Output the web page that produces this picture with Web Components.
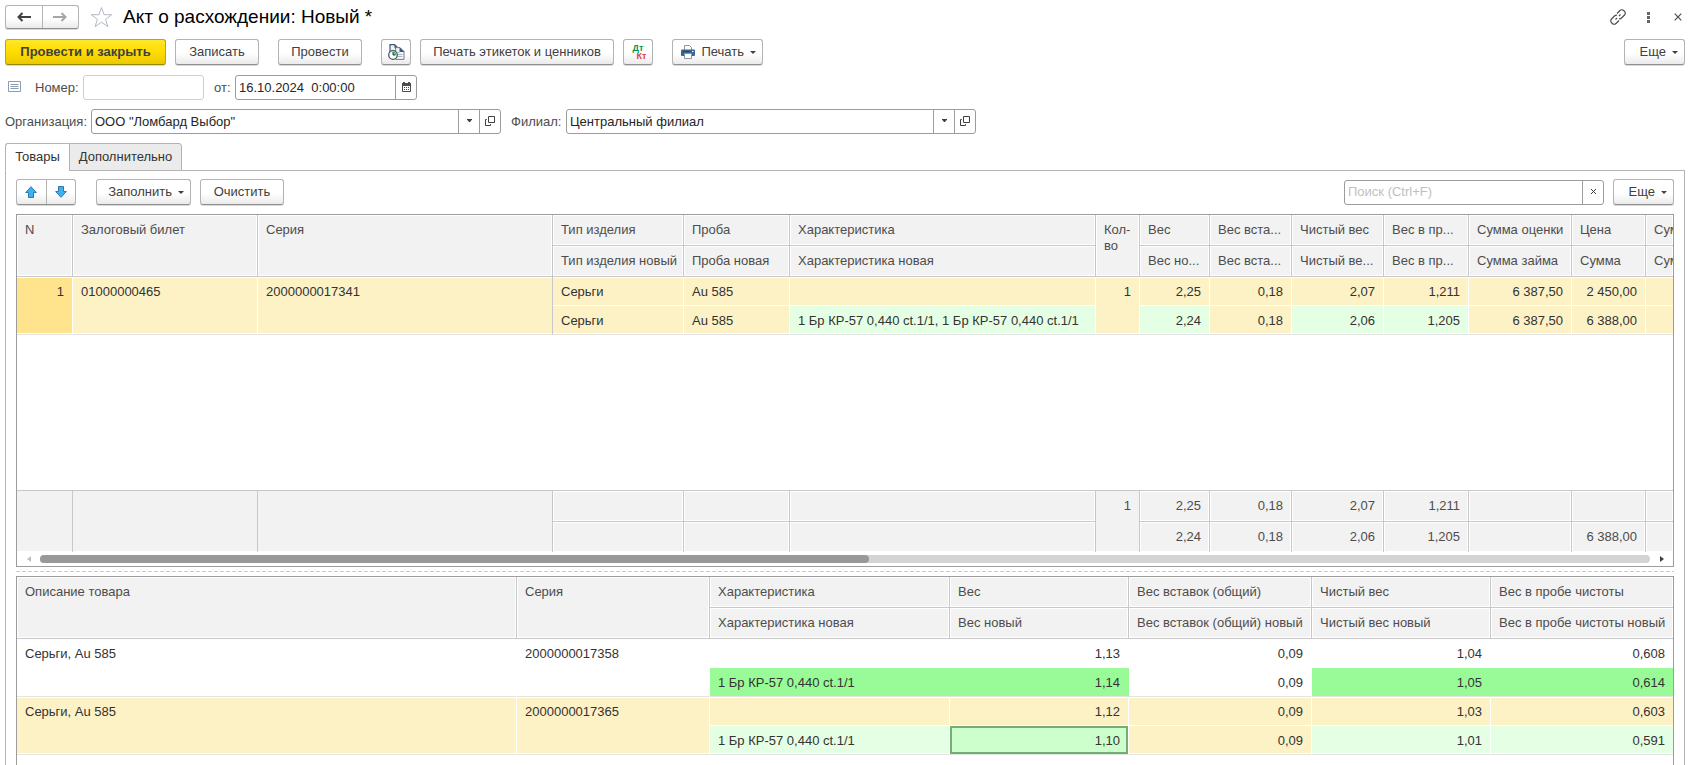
<!DOCTYPE html>
<html lang="ru">
<head>
<meta charset="utf-8">
<title>Акт о расхождении: Новый *</title>
<style>
  html, body { height: 100%; }
  body { margin: 0; overflow: hidden; background: #fff; color: #404040; font: 13px/16px "Liberation Sans", Arial, sans-serif; }
</style>
</head>
<body>
<discrepancy-act></discrepancy-act>

<script>
const BASE = `
  *, *::before, *::after { box-sizing: border-box; }
  button, input { font: inherit; color: inherit; margin: 0; }
  button { cursor: pointer; }
  svg { display: block; flex: none; }
`;

function define(name, markup, extra = {}) {
  const template = document.createElement('template');
  template.innerHTML = markup;
  class Element extends HTMLElement {
    constructor() {
      super();
      this.attachShadow({ mode: 'open' }).append(template.content.cloneNode(true));
    }
    connectedCallback() { if (extra.setup) extra.setup(this, this.shadowRoot); }
  }
  customElements.define(name, Element);
}

/* Command button: kind="primary" is yellow, "menu" has a caret on the right */
define('act-button', `<style>${BASE}
  :host { display: block; height: 26px; flex: none; }
  button { display: flex; align-items: center; justify-content: center; gap: 8px; width: 100%; height: 100%; padding: 0 4px; white-space: nowrap;
    border: 1px solid #b3b3b3; border-bottom-color: #8f8f8f; border-radius: 3px; background: linear-gradient(#fff 55%, #ebebeb); box-shadow: 0 1px 0 #d9d9d9; }
  .caret { display: none; width: 0; border: 3px solid transparent; border-top-color: #404040; border-bottom: 0; }
  :host([kind="primary"]) button { font-weight: bold; background: linear-gradient(#ffe629, #ffdd00 50%, #ecc900); border-color: #c2a500; border-bottom-color: #9c8600; }
  :host([kind="menu"]) button { justify-content: flex-end; padding: 0 6px; gap: 6px; }
  :host([kind="menu"]) .caret { display: block; }
</style><button type="button"><slot></slot><span class="caret"></span></button>`, {
  setup(host, root) {
    if (host.hasAttribute('hint')) root.querySelector('button').setAttribute('aria-label', host.getAttribute('hint'));
  }
});

/* Two joined icon buttons */
define('button-pair', `<style>${BASE}
  :host { display: flex; flex: none; border: 1px solid #b3b3b3; border-bottom-color: #8f8f8f; border-radius: 3px; background: linear-gradient(#fff 55%, #ebebeb); box-shadow: 0 1px 0 #d9d9d9; }
  button { flex: 1; display: flex; align-items: center; justify-content: center; padding: 0; border: 0; background: none; }
  button + button { border-left: 1px solid #b3b3b3; }
</style>
<button type="button" class="a"><slot name="first"></slot></button><button type="button" class="b"><slot name="second"></slot></button>`, {
  setup(host, root) {
    root.querySelector('.a').setAttribute('aria-label', host.getAttribute('first-hint'));
    root.querySelector('.b').setAttribute('aria-label', host.getAttribute('second-hint'));
  }
});

/* Labelled text box with optional buttons: buttons="date" | "ref" | "clear" */
const FIELD_BUTTONS = {
  date: `<button type="button" aria-label="Календарь"><svg width="9" height="10" viewBox="0 0 9 10"><path d="M.5 2.500h8v7h-8z" fill="none" stroke="#4d4d4d"/><path d="M0 1h9v3H0zM1 0h2v2H1zM6 0h2v2H6z" fill="#4d4d4d"/><path d="M2 5.500h5M2 7.500h5" stroke="#4d4d4d" stroke-dasharray="1 1" fill="none"/></svg></button>`,
  ref: `<button type="button" aria-label="Выбрать"><svg width="5" height="3" viewBox="0 0 5 3"><path d="M0 0h5v.5L3 3H2L0 .5z" fill="#404040"/></svg></button><button type="button" aria-label="Открыть"><svg width="10" height="10" viewBox="0 0 10 10" fill="none" stroke="#404040"><path d="M3.500.5h6v6h-6zM1.800 3.500H.5v6h5V8.200"/></svg></button>`,
  clear: `<button type="button" aria-label="Очистить поиск"><svg width="7" height="7" viewBox="0 0 7 7"><path d="M1 1l5 5M6 1L1 6" stroke="#404040"/></svg></button>`
};
define('act-field', `<style>${BASE}
  :host { display: flex; align-items: center; height: 25px; flex: none; --line: #9c9c9c; }
  label { width: var(--label, auto); flex: none; color: #4d4d4d; }
  .box { display: flex; width: var(--box, 100%); height: 100%; border: 1px solid var(--line); border-radius: 3px; background: #fff; }
  input { flex: 1; min-width: 0; border: 0; outline: 0; background: none; padding: 0 3px; color: #262626; }
  input::placeholder { color: #bfbfbf; opacity: 1; }
  button { width: 21px; flex: none; padding: 0 0 2px; border: 0; border-left: 1px solid var(--line); background: none; display: flex; align-items: center; justify-content: center; }
  :host([plain]) { --line: #cfcfcf; }
</style><label for="v"></label><div class="box"><input id="v" type="text" autocomplete="off"></div>`, {
  setup(host, root) {
    const label = root.querySelector('label'), input = root.querySelector('input');
    if (host.hasAttribute('label')) label.textContent = host.getAttribute('label'); else label.remove();
    input.value = host.getAttribute('value') || '';
    if (host.hasAttribute('placeholder')) {
      input.placeholder = host.getAttribute('placeholder');
      input.setAttribute('aria-label', 'Поиск');
    }
    const kind = host.getAttribute('buttons');
    if (kind) root.querySelector('.box').insertAdjacentHTML('beforeend', FIELD_BUTTONS[kind]);
  }
});

define('act-tabs', `<style>${BASE}
  :host { display: flex; height: 28px; margin-bottom: -1px; position: relative; }
  button { padding: 0 0 1px; text-align: center; border: 1px solid #b3b3b3; background: #ebebeb; color: #333; }
  button[aria-selected="true"] { width: 64px; background: #fff; border-bottom-color: #fff; border-right: 0; border-radius: 3px 0 0 0; }
  button[aria-selected="false"] { width: 113px; border-radius: 0 3px 0 0; }
  div { display: flex; }
</style><div role="tablist"><button type="button" role="tab" aria-selected="true">Товары</button><button type="button" role="tab" aria-selected="false">Дополнительно</button></div>`);

const GRID = `${BASE}
  table { width: 100%; table-layout: fixed; border-collapse: separate; border-spacing: 0; }
  th, td { padding: 7px 8px 0; vertical-align: top; overflow: hidden; white-space: nowrap; font-weight: normal; text-align: left; }
  th, tfoot td { height: 31px; background: #f2f2f2; color: #4d4d4d; box-shadow: inset 0 0 0 1px #fff; border-right: 1px solid #c8c8c8; }
  th { border-bottom: 1px solid #c8c8c8; }
  th.wrap { white-space: normal; }
  tr > :last-child.edge { border-right: 0; }
  tfoot td { border-top: 1px solid #c8c8c8; }
  tbody td { height: 29px; color: #333; border-right: 1px solid #fff; border-bottom: 1px solid #fff; }
  tr.new td, td[rowspan] { border-bottom-color: #e3e3e3; box-shadow: inset 0 -1px 0 #fff; }
  tr.old td { box-shadow: inset 0 1px 0 #fff; }
  tr.old td[rowspan] { box-shadow: inset 0 1px 0 #fff, inset 0 -1px 0 #fff; }
  tfoot td[rowspan] { border-bottom: 0; }
  .n { text-align: right; }
  .sel td { background: #fdf1c6; }
  .sel td.cur { background: #ffe48d; }
  .sel td.frozen { border-right-color: #c8c8c8; }
  .sel td.diff { background: #e4ffe4; }
  tr.new td.diff2 { background: #98fb98; border-right-color: #98fb98; box-shadow: none; }
  .sel td.focus { background: #ccffcc; box-shadow: inset 0 0 0 2px #76ad76; border-bottom-color: #e3e3e3; }
`;

define('goods-grid', `<style>${GRID}
  :host { display: block; border: 1px solid #9c9c9c; }
  .gap td { height: 155px; padding: 0; border: 0; }
  .scroll { display: flex; align-items: center; height: 14px; }
  .scroll button { width: 23px; height: 14px; padding: 0; border: 0; background: none; display: flex; align-items: center; justify-content: center; }
  .track { flex: 1; height: 8px; border-radius: 4px; background: #d4d4d4; }
  .thumb { width: 51.5%; height: 8px; border-radius: 4px; background: #999; }
</style>
<table>
<colgroup><col style="width:56px"><col style="width:185px"><col style="width:295px"><col style="width:131px"><col style="width:106px"><col style="width:306px"><col style="width:44px"><col style="width:70px"><col style="width:82px"><col style="width:92px"><col style="width:85px"><col style="width:103px"><col style="width:74px"><col></colgroup>
<thead>
<tr><th rowspan="2">N</th><th rowspan="2">Залоговый билет</th><th rowspan="2">Серия</th><th>Тип изделия</th><th>Проба</th><th>Характеристика</th><th rowspan="2" class="wrap">Кол-во</th><th>Вес</th><th>Вес вста...</th><th>Чистый вес</th><th>Вес в пр...</th><th>Сумма оценки</th><th>Цена</th><th class="edge">Сум</th></tr>
<tr><th>Тип изделия новый</th><th>Проба новая</th><th>Характеристика новая</th><th>Вес но...</th><th>Вес вста...</th><th>Чистый ве...</th><th>Вес в пр...</th><th>Сумма займа</th><th>Сумма</th><th class="edge">Сум</th></tr>
</thead>
<tbody>
<tr class="old sel"><td rowspan="2" class="n cur">1</td><td rowspan="2">01000000465</td><td rowspan="2" class="frozen">2000000017341</td><td>Серьги</td><td>Au 585</td><td></td><td rowspan="2" class="n">1</td><td class="n">2,25</td><td class="n">0,18</td><td class="n">2,07</td><td class="n">1,211</td><td class="n">6 387,50</td><td class="n">2 450,00</td><td class="edge"></td></tr>
<tr class="new sel"><td>Серьги</td><td>Au 585</td><td class="diff">1 Бр КР-57 0,440 ct.1/1, 1 Бр КР-57 0,440 ct.1/1</td><td class="n diff">2,24</td><td class="n">0,18</td><td class="n diff">2,06</td><td class="n diff">1,205</td><td class="n">6 387,50</td><td class="n">6 388,00</td><td class="edge"></td></tr>
<tr class="gap"><td colspan="14"></td></tr>
</tbody>
<tfoot>
<tr><td rowspan="2"></td><td rowspan="2"></td><td rowspan="2"></td><td></td><td></td><td></td><td rowspan="2" class="n">1</td><td class="n">2,25</td><td class="n">0,18</td><td class="n">2,07</td><td class="n">1,211</td><td></td><td></td><td class="edge"></td></tr>
<tr><td></td><td></td><td></td><td class="n">2,24</td><td class="n">0,18</td><td class="n">2,06</td><td class="n">1,205</td><td></td><td class="n">6 388,00</td><td class="edge"></td></tr>
</tfoot>
</table>
<div class="scroll"><button type="button" aria-label="Влево"><svg width="4" height="6" viewBox="0 0 4 6"><path d="M4 0v6L0 3z" fill="#bfbfbf"/></svg></button><div class="track"><div class="thumb"></div></div><button type="button" aria-label="Вправо"><svg width="4" height="6" viewBox="0 0 4 6"><path d="M0 0v6l4-3z" fill="#404040"/></svg></button></div>`);

define('items-grid', `<style>${GRID}
  :host { display: block; flex: 1; border: 1px solid #9c9c9c; border-bottom: 0; }
</style>
<table>
<colgroup><col><col style="width:193px"><col style="width:240px"><col style="width:179px"><col style="width:183px"><col style="width:179px"><col style="width:182px"></colgroup>
<thead>
<tr><th rowspan="2">Описание товара</th><th rowspan="2">Серия</th><th>Характеристика</th><th>Вес</th><th>Вес вставок (общий)</th><th>Чистый вес</th><th class="edge">Вес в пробе чистоты</th></tr>
<tr><th>Характеристика новая</th><th>Вес новый</th><th>Вес вставок (общий) новый</th><th>Чистый вес новый</th><th class="edge">Вес в пробе чистоты новый</th></tr>
</thead>
<tbody>
<tr class="old"><td rowspan="2">Серьги, Au 585</td><td rowspan="2">2000000017358</td><td></td><td class="n">1,13</td><td class="n">0,09</td><td class="n">1,04</td><td class="n edge">0,608</td></tr>
<tr class="new"><td class="diff2">1 Бр КР-57 0,440 ct.1/1</td><td class="n diff2">1,14</td><td class="n">0,09</td><td class="n diff2">1,05</td><td class="n edge diff2">0,614</td></tr>
<tr class="old sel"><td rowspan="2">Серьги, Au 585</td><td rowspan="2">2000000017365</td><td></td><td class="n">1,12</td><td class="n">0,09</td><td class="n">1,03</td><td class="n edge">0,603</td></tr>
<tr class="new sel"><td class="diff">1 Бр КР-57 0,440 ct.1/1</td><td class="n diff focus">1,10</td><td class="n">0,09</td><td class="n diff">1,01</td><td class="n edge diff">0,591</td></tr>
</tbody>
</table>`);

define('discrepancy-act', `<style>${BASE}
  :host { display: flex; flex-direction: column; height: 100%; padding: 5px 5px 0; }
  .row { display: flex; align-items: center; flex: none; }
  .grow { flex: 1; }
  .title { height: 24px; margin-bottom: 10px; }
  .title button-pair { width: 74px; height: 24px; }
  .title .star { margin: 0 10px 0 11px; padding: 0; border: 0; background: none; }
  h1 { margin: 0; font-size: 19px; line-height: 24px; font-weight: normal; color: #000; }
  .tools { display: flex; gap: 16px; }
  .tools button { width: 14px; height: 16px; padding: 0; border: 0; background: none; display: flex; align-items: center; justify-content: center; }
  .commands { margin-bottom: 10px; gap: 9px; }
  .sp { margin-left: 10px; }
  .w-primary { width: 161px; } .w-std { width: 84px; } .w-icon { width: 30px; } .w-long { width: 194px; } .w-print { width: 91px; } .w-more { width: 61px; } .w-fill { width: 95px; }
  .number { margin-bottom: 9px; gap: 10px; }
  .number .state { width: 20px; padding: 0 3px 3px; }
  .refs { margin-bottom: 9px; gap: 10px; }
  .pane { flex: 1; min-height: 0; display: flex; flex-direction: column; border: 1px solid #b3b3b3; border-bottom: 0; padding: 8px 10px 0; }
  .bar { height: 26px; margin-bottom: 9px; gap: 9px; }
  .bar button-pair { width: 60px; height: 26px; margin-right: 11px; }
  .split { height: 9px; flex: none; display: flex; align-items: center; }
  .split::before { content: ""; flex: 1; height: 1px; background: repeating-linear-gradient(90deg, #ccc 0 4px, transparent 4px 6px); }
  .dk { display: grid; width: 17px; font: bold 9px/8px "Liberation Sans", Arial, sans-serif; }
  .dk .d { color: #009646; } .dk .k { color: #e0403c; text-align: right; }
</style>
<header class="row title">
  <button-pair first-hint="Назад" second-hint="Вперед">
    <svg slot="first" width="14" height="10" viewBox="0 0 14 10"><path d="M14 5H2M5.500 1L1.500 5l4 4" fill="none" stroke="#404040" stroke-width="2"/></svg>
    <svg slot="second" width="14" height="10" viewBox="0 0 14 10"><path d="M0 5h12M8.500 1l4 4-4 4" fill="none" stroke="#a6a6a6" stroke-width="2"/></svg>
  </button-pair>
  <button class="star" type="button" aria-label="В избранное"><svg width="23" height="23" viewBox="0 0 23 23"><path d="M11.500 1.500l2.600 7.200h7.600l-6.100 4.600 2.300 7.400-6.400-4.500-6.400 4.500 2.300-7.400-6.100-4.600h7.600z" fill="#fff" stroke="#b3b9c2" stroke-width="1"/></svg></button>
  <h1>Акт о расхождении: Новый *</h1>
  <span class="grow"></span>
  <div class="tools">
    <button type="button" aria-label="Ссылка"><svg width="16" height="16" viewBox="0 0 16 16" fill="none" stroke="#4d4d4d" stroke-width="1.200"><path d="M7 4.500l3-3a2.600 2.600 0 0 1 3.700 0l.8.8a2.600 2.600 0 0 1 0 3.700l-3 3a2.600 2.600 0 0 1-2.500.7M9 11.500l-3 3a2.600 2.600 0 0 1-3.700 0l-.8-.8a2.600 2.600 0 0 1 0-3.700l3-3A2.600 2.600 0 0 1 7 6.300M5.500 10.500l1.500-1.500M9 7l1.500-1.500"/></svg></button>
    <button type="button" aria-label="Меню"><svg width="3" height="11" viewBox="0 0 3 11" fill="#666"><path d="M0 0h3v3H0zM0 4h3v3H0zM0 8h3v3H0z"/></svg></button>
    <button type="button" aria-label="Закрыть"><svg width="8" height="8" viewBox="0 0 8 8"><path d="M.7.700l6.600 6.600M7.300.700L.7 7.300" stroke="#4d4d4d" stroke-width="1.200"/></svg></button>
  </div>
</header>

<div class="row commands">
  <act-button kind="primary" class="w-primary">Провести и закрыть</act-button>
  <act-button class="w-std">Записать</act-button>
  <act-button class="w-std sp">Провести</act-button>
  <act-button class="w-icon sp" hint="Отложенное проведение"><svg width="17" height="16" viewBox="0 0 17 16"><path d="M2 12V.6h4.500L10 4v8z" fill="#eef2f6" stroke="#44586d" stroke-width="1.200"/><path d="M6.500.6V4H10z" fill="#44586d"/><path d="M7.600 3.600h4.400l4 4v7.800H7.600z" fill="#f4f7fa" stroke="#6f8090" stroke-width="1"/><path d="M11.500 3l5 5h-5z" fill="#44586d"/><path d="M9.500 8.500h2M9.500 10.500h5M9.500 12.500h5" stroke="#a9b5c1"/><circle cx="5" cy="11" r="4.300" fill="#fff" stroke="#44586d" stroke-width="1.300"/><path d="M5 11V7.500A3.500 3.500 0 0 1 8.500 11z" fill="#4ad455"/><path d="M5 8v3h2.500" fill="none" stroke="#24405a"/></svg></act-button>
  <act-button class="w-long">Печать этикеток и ценников</act-button>
  <act-button class="w-icon"><span class="dk"><span class="d">Дт</span><span class="k">Кт</span></span></act-button>
  <act-button class="w-print sp" kind="menu"><svg width="14" height="14" viewBox="0 0 14 14"><path d="M3.500 5V.5h5l2 2V5" fill="#fff" stroke="#8796a8"/><path d="M1 4.500h12q1 0 1 1V10q0 1-1 1H1q-1 0-1-1V5.500q0-1 1-1z" fill="#3b648f"/><path d="M2 6.500h7" stroke="#24466a"/><path d="M11 6h1.500v1H11z" fill="#fff"/><path d="M3.500 8.500h7v5h-7z" fill="#fff" stroke="#8796a8"/></svg>Печать</act-button>
  <span class="grow"></span>
  <act-button class="w-more" kind="menu">Еще</act-button>
</div>

<div class="row number">
  <span class="state"><svg width="13" height="11" viewBox="0 0 13 11"><path d="M.5.5h12v10H.5z" fill="#fff" stroke="#8a9cb0"/><path d="M2.500 3.500h8M2.500 5.500h8M2.500 7.500h8" stroke="#8a9cb0"/></svg></span>
  <act-field plain label="Номер:" style="--label:48px;--box:121px"></act-field>
  <act-field label="от:" value="16.10.2024  0:00:00" buttons="date" style="--label:21px;--box:182px"></act-field>
</div>

<div class="row refs">
  <act-field label="Организация:" value='ООО "Ломбард Выбор"' buttons="ref" style="--label:86px;--box:410px"></act-field>
  <act-field label="Филиал:" value="Центральный филиал" buttons="ref" style="--label:55px;--box:410px"></act-field>
</div>

<act-tabs></act-tabs>
<main class="pane">
  <div class="row bar">
    <button-pair first-hint="Переместить вверх" second-hint="Переместить вниз">
      <svg slot="first" width="12" height="12" viewBox="0 0 12 12"><path d="M6 .7l5.300 5.800H8.500v5h-5v-5H.7z" fill="#41b0f0" stroke="#2c78ad"/></svg>
      <svg slot="second" width="12" height="12" viewBox="0 0 12 12"><path d="M6 11.300L.7 5.500h2.800v-5h5v5h2.800z" fill="#41b0f0" stroke="#2c78ad"/></svg>
    </button-pair>
    <act-button class="w-fill" kind="menu">Заполнить</act-button>
    <act-button class="w-std">Очистить</act-button>
    <span class="grow"></span>
    <act-field placeholder="Поиск (Ctrl+F)" buttons="clear" style="--box:260px"></act-field>
    <act-button class="w-more" kind="menu">Еще</act-button>
  </div>
  <goods-grid></goods-grid>
  <div class="split"></div>
  <items-grid></items-grid>
</main>`);
</script>
</body>
</html>
